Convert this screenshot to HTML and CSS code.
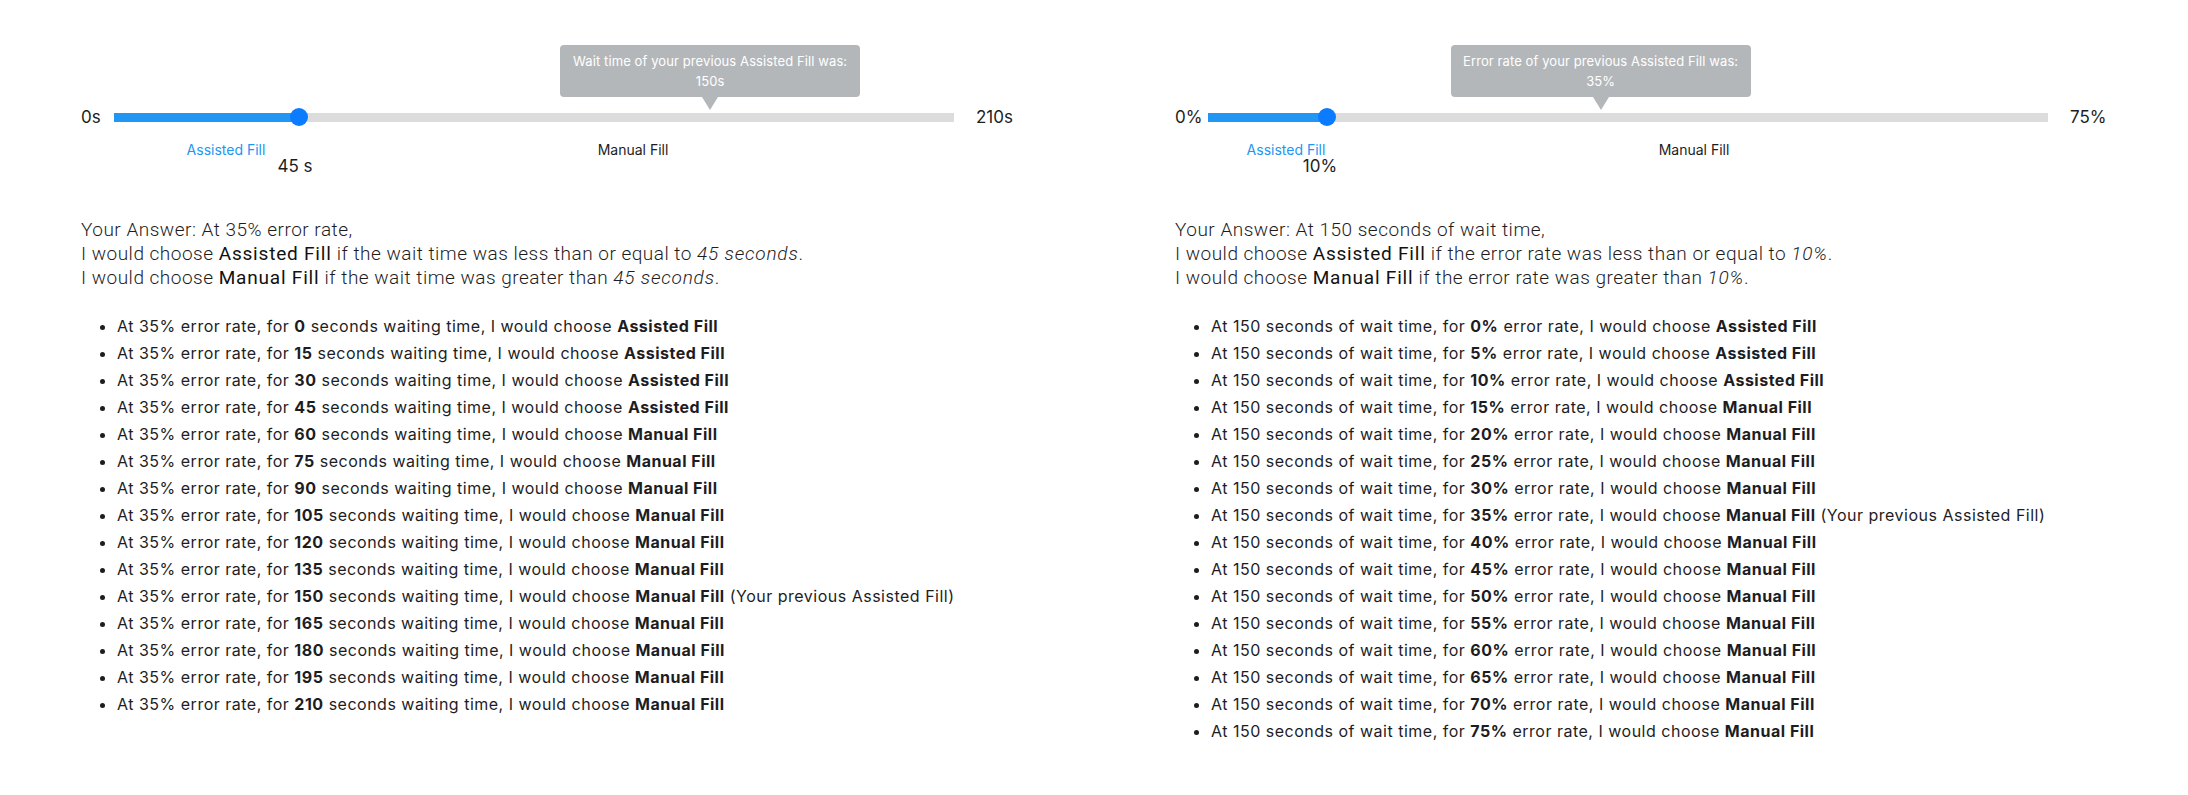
FILE: index.html
```html
<!DOCTYPE html>
<html lang="en">
<head>
<meta charset="utf-8">
<title>Your Answer</title>
<link rel="stylesheet" href="styles.css">
</head>
<body>
<main class="page">
  <section class="col">
    <div class="slider">
      <span class="end end-min">0s</span>
      <div class="track">
        <div class="rail"></div>
        <div class="fill" style="width: calc(9px + 0.2143 * (100% - 18px))"></div>
        <div class="tip" style="left: calc(9px + 0.7143 * (100% - 18px))">Wait time of your previous Assisted Fill was:<br>150s</div>
        <div class="thumb" style="left: calc(9px + 0.2143 * (100% - 18px))"></div>
      </div>
      <span class="end end-max">210s</span>
    </div>
    <div class="scale">
      <span class="zone zone-assisted" style="left: 112px">Assisted Fill</span>
      <span class="zone" style="left: 519px">Manual Fill</span>
      <span class="value" style="left: 181px">45 s</span>
    </div>
    <p class="answer">Your Answer: At 35% error rate,<br>I would choose <strong>Assisted Fill</strong> if the wait time was less than or equal to <em>45 seconds</em>.<br>I would choose <strong>Manual Fill</strong> if the wait time was greater than <em>45 seconds</em>.</p>
    <ul class="choices">
      <li>At 35% error rate, for <b>0</b> seconds waiting time, I would choose <b>Assisted Fill</b></li>
      <li>At 35% error rate, for <b>15</b> seconds waiting time, I would choose <b>Assisted Fill</b></li>
      <li>At 35% error rate, for <b>30</b> seconds waiting time, I would choose <b>Assisted Fill</b></li>
      <li>At 35% error rate, for <b>45</b> seconds waiting time, I would choose <b>Assisted Fill</b></li>
      <li>At 35% error rate, for <b>60</b> seconds waiting time, I would choose <b>Manual Fill</b></li>
      <li>At 35% error rate, for <b>75</b> seconds waiting time, I would choose <b>Manual Fill</b></li>
      <li>At 35% error rate, for <b>90</b> seconds waiting time, I would choose <b>Manual Fill</b></li>
      <li>At 35% error rate, for <b>105</b> seconds waiting time, I would choose <b>Manual Fill</b></li>
      <li>At 35% error rate, for <b>120</b> seconds waiting time, I would choose <b>Manual Fill</b></li>
      <li>At 35% error rate, for <b>135</b> seconds waiting time, I would choose <b>Manual Fill</b></li>
      <li>At 35% error rate, for <b>150</b> seconds waiting time, I would choose <b>Manual Fill</b> (Your previous Assisted Fill)</li>
      <li>At 35% error rate, for <b>165</b> seconds waiting time, I would choose <b>Manual Fill</b></li>
      <li>At 35% error rate, for <b>180</b> seconds waiting time, I would choose <b>Manual Fill</b></li>
      <li>At 35% error rate, for <b>195</b> seconds waiting time, I would choose <b>Manual Fill</b></li>
      <li>At 35% error rate, for <b>210</b> seconds waiting time, I would choose <b>Manual Fill</b></li>
    </ul>
  </section>
  <section class="col">
    <div class="slider">
      <span class="end end-min">0%</span>
      <div class="track">
        <div class="rail"></div>
        <div class="fill" style="width: calc(9px + 0.1333 * (100% - 18px))"></div>
        <div class="tip" style="left: calc(9px + 0.4667 * (100% - 18px))">Error rate of your previous Assisted Fill was:<br>35%</div>
        <div class="thumb" style="left: calc(9px + 0.1333 * (100% - 18px))"></div>
      </div>
      <span class="end end-max">75%</span>
    </div>
    <div class="scale">
      <span class="zone zone-assisted" style="left: 78px">Assisted Fill</span>
      <span class="zone" style="left: 486px">Manual Fill</span>
      <span class="value" style="left: 112px">10%</span>
    </div>
    <p class="answer">Your Answer: At 150 seconds of wait time,<br>I would choose <strong>Assisted Fill</strong> if the error rate was less than or equal to <em>10%</em>.<br>I would choose <strong>Manual Fill</strong> if the error rate was greater than <em>10%</em>.</p>
    <ul class="choices">
      <li>At 150 seconds of wait time, for <b>0%</b> error rate, I would choose <b>Assisted Fill</b></li>
      <li>At 150 seconds of wait time, for <b>5%</b> error rate, I would choose <b>Assisted Fill</b></li>
      <li>At 150 seconds of wait time, for <b>10%</b> error rate, I would choose <b>Assisted Fill</b></li>
      <li>At 150 seconds of wait time, for <b>15%</b> error rate, I would choose <b>Manual Fill</b></li>
      <li>At 150 seconds of wait time, for <b>20%</b> error rate, I would choose <b>Manual Fill</b></li>
      <li>At 150 seconds of wait time, for <b>25%</b> error rate, I would choose <b>Manual Fill</b></li>
      <li>At 150 seconds of wait time, for <b>30%</b> error rate, I would choose <b>Manual Fill</b></li>
      <li>At 150 seconds of wait time, for <b>35%</b> error rate, I would choose <b>Manual Fill</b> (Your previous Assisted Fill)</li>
      <li>At 150 seconds of wait time, for <b>40%</b> error rate, I would choose <b>Manual Fill</b></li>
      <li>At 150 seconds of wait time, for <b>45%</b> error rate, I would choose <b>Manual Fill</b></li>
      <li>At 150 seconds of wait time, for <b>50%</b> error rate, I would choose <b>Manual Fill</b></li>
      <li>At 150 seconds of wait time, for <b>55%</b> error rate, I would choose <b>Manual Fill</b></li>
      <li>At 150 seconds of wait time, for <b>60%</b> error rate, I would choose <b>Manual Fill</b></li>
      <li>At 150 seconds of wait time, for <b>65%</b> error rate, I would choose <b>Manual Fill</b></li>
      <li>At 150 seconds of wait time, for <b>70%</b> error rate, I would choose <b>Manual Fill</b></li>
      <li>At 150 seconds of wait time, for <b>75%</b> error rate, I would choose <b>Manual Fill</b></li>
    </ul>
  </section>
</main>
</body>
</html>
```

FILE: styles.css
```css
html, body {
  margin: 0;
  padding: 0;
  background: #ffffff;
}

body {
  font-family: Inter, "Liberation Sans", sans-serif;
  color: #1d1d1f;
}

.page {
  display: grid;
  grid-template-columns: 1094px 1094px;
}

.col {
  padding: 108px 0 0 81px;
}

.slider {
  display: flex;
  align-items: center;
  height: 18px;
}

.end {
  font-size: 17px;
  line-height: 20px;
  color: #1d1d1f;
}

.end-min {
  width: 33px;
}

.end-max {
  margin-left: 22px;
}

.track {
  position: relative;
  width: 840px;
  height: 18px;
}

.rail {
  position: absolute;
  left: 0;
  right: 0;
  top: 4.5px;
  height: 9px;
  background: #dcdcdc;
}

.fill {
  position: absolute;
  left: 0;
  top: 4.5px;
  height: 9px;
  background: #2196f3;
}

.thumb {
  position: absolute;
  top: 0;
  width: 18px;
  height: 18px;
  border-radius: 50%;
  background: #0b7bff;
  transform: translateX(-50%);
}

.tip {
  position: absolute;
  bottom: calc(100% + 11px);
  width: 300px;
  transform: translateX(-50%);
  background: #b4b7ba;
  color: #ffffff;
  font-size: 13px;
  line-height: 20px;
  letter-spacing: 0.1px;
  padding: 6px 0;
  text-align: center;
  border-radius: 4px;
}

.tip::after {
  content: "";
  position: absolute;
  top: 100%;
  left: 50%;
  margin-left: -8px;
  border-left: 8px solid transparent;
  border-right: 8px solid transparent;
  border-top: 13px solid #b4b7ba;
}

.scale {
  position: relative;
  margin-left: 33px;
  width: 840px;
  height: 92px;
}

.zone {
  position: absolute;
  top: 16px;
  font-size: 14px;
  line-height: 16px;
  white-space: nowrap;
  transform: translateX(-50%);
  color: #1d1d1f;
}

.zone-assisted {
  color: #2196f3;
}

.value {
  position: absolute;
  top: 30px;
  font-size: 17px;
  line-height: 20px;
  white-space: nowrap;
  transform: translateX(-50%);
}

.answer {
  margin: 0;
  font-family: Roboto, "Liberation Sans", sans-serif;
  font-weight: 300;
  font-size: 19px;
  line-height: 24px;
  letter-spacing: 0.5px;
  color: #1d1d1f;
}

.answer strong {
  font-weight: 400;
  letter-spacing: 0.8px;
  color: #111111;
}

.answer em {
  font-style: italic;
  letter-spacing: 0.8px;
}

.choices {
  margin: 23px 0 0;
  padding-left: 36px;
  font-size: 16px;
  line-height: 27px;
  letter-spacing: 0.5px;
}

.choices b {
  font-weight: 700;
}
```
